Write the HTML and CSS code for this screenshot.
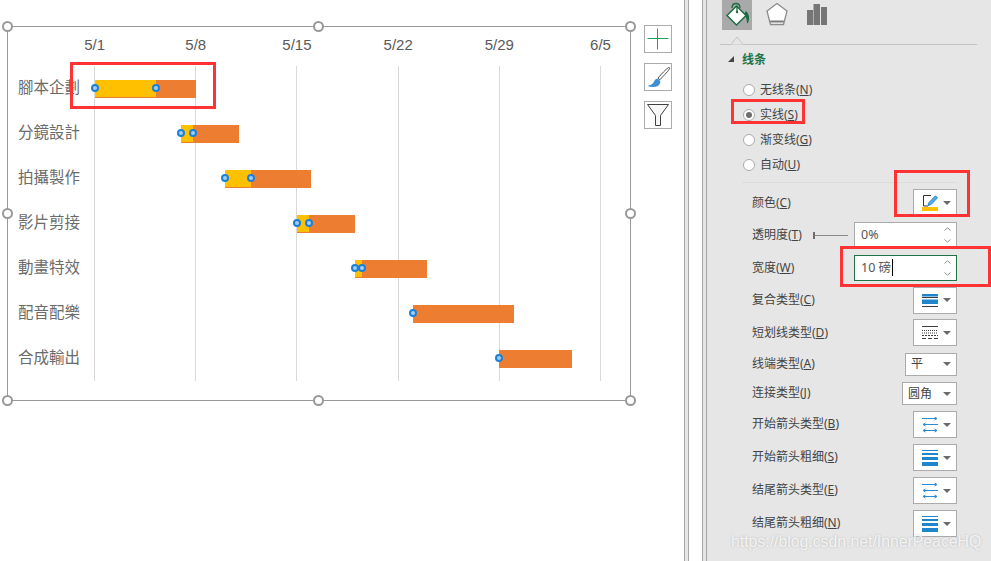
FILE: index.html
```html
<!DOCTYPE html>
<html lang="zh">
<head>
<meta charset="UTF-8" />
<title>Gantt chart - line format</title>
<link rel="stylesheet" href="styles.css">
</head>
<body>

<svg class="defs">
  <symbol id="ico-up" viewBox="0 0 7 4"><path d="M.5 3.500 3.500 .8l3 2.700" fill="none" stroke="#8c8c8c"/></symbol>
  <symbol id="ico-down" viewBox="0 0 7 4"><path d="M.5 .5l3 2.700 3-2.700" fill="none" stroke="#8c8c8c"/></symbol>
  <symbol id="ico-arrows" viewBox="0 0 16 16">
    <path d="M0 1.500h15M12.500 0 15 1.500 12.500 3M16 7.500H1M3.500 6 1 7.500 3.500 9M1 13.500h14M3.500 12 1 13.500 3.500 15M12.500 12l2.500 1.500L12.500 15" fill="none" stroke="#2a8dd4"/>
  </symbol>
  <symbol id="ico-weight" viewBox="0 0 16 16">
    <path d="M0 0h16v1H0zM0 3h16v2H0zM0 7h16v3H0zM0 12h16v4H0z" fill="#1f86cc"/>
  </symbol>
</svg>

<div class="page">

  <!-- Graphique -->
  <div class="workspace">
    <div class="chart">
      <div class="axis">
        <span>5/1</span><span>5/8</span><span>5/15</span><span>5/22</span><span>5/29</span><span>6/5</span>
      </div>
      <div class="rows">
        <div class="row">
          <div class="row-label">腳本企劃</div>
          <div class="track">
            <div class="bar" style="margin-left:1px;width:101px">
              <span class="bar-done" style="width:61px"></span>
              <i class="dot" style="left:0"></i><i class="dot" style="left:61px"></i>
            </div>
          </div>
        </div>
        <div class="row">
          <div class="row-label">分鏡設計</div>
          <div class="track">
            <div class="bar" style="margin-left:87px;width:58px">
              <span class="bar-done" style="width:12px"></span>
              <i class="dot" style="left:0"></i><i class="dot" style="left:12px"></i>
            </div>
          </div>
        </div>
        <div class="row">
          <div class="row-label">拍攝製作</div>
          <div class="track">
            <div class="bar" style="margin-left:131px;width:86px">
              <span class="bar-done" style="width:26px"></span>
              <i class="dot" style="left:0"></i><i class="dot" style="left:26px"></i>
            </div>
          </div>
        </div>
        <div class="row">
          <div class="row-label">影片剪接</div>
          <div class="track">
            <div class="bar" style="margin-left:203px;width:58px">
              <span class="bar-done" style="width:12px"></span>
              <i class="dot" style="left:0"></i><i class="dot" style="left:12px"></i>
            </div>
          </div>
        </div>
        <div class="row">
          <div class="row-label">動畫特效</div>
          <div class="track">
            <div class="bar" style="margin-left:261px;width:72px">
              <span class="bar-done" style="width:7px"></span>
              <i class="dot" style="left:0"></i><i class="dot" style="left:7px"></i>
            </div>
          </div>
        </div>
        <div class="row">
          <div class="row-label">配音配樂</div>
          <div class="track">
            <div class="bar" style="margin-left:319px;width:101px">
              <i class="dot" style="left:0"></i>
            </div>
          </div>
        </div>
        <div class="row">
          <div class="row-label">合成輸出</div>
          <div class="track">
            <div class="bar" style="margin-left:405px;width:73px">
              <i class="dot" style="left:0"></i>
            </div>
          </div>
        </div>
      </div>

      <i class="handle h-tl"></i><i class="handle h-tc"></i><i class="handle h-tr"></i>
      <i class="handle h-ml"></i><i class="handle h-mr"></i>
      <i class="handle h-bl"></i><i class="handle h-bc"></i><i class="handle h-br"></i>
    </div>

    <div class="chart-tools">
      <button class="tool">
        <svg width="26" height="26" viewBox="0 0 26 26"><path d="M2.500 12.500h21M12.500 2.500v21" stroke="#21a355" fill="none"/></svg>
      </button>
      <button class="tool">
        <svg width="26" height="26" viewBox="0 0 26 26">
          <path d="M23.500 3.500c-3 2-7 6.500-10.500 10.500l1.800 1.800c3.500-3.800 8-8 9.700-11 .4-1-.2-1.600-1-1.300z" fill="#fff" stroke="#595959"/>
          <path d="M12.500 14.500c-2 .5-3 1.500-4 4-.6 1.500-3 2.800-6 3.500 3 1.200 7.500 1.200 10 .2 2-.8 3-3 2.800-5.200z" fill="#3f8fd6"/>
        </svg>
      </button>
      <button class="tool">
        <svg width="26" height="26" viewBox="0 0 26 26"><path d="M2.500 2.500h21l-8 11v10h-5v-10z" fill="#f7f7f7" stroke="#404040"/></svg>
      </button>
    </div>
  </div>

  <div class="splitter"></div>
  <div class="gutter"></div>
  <div class="splitter"></div>

  <!-- Panneau format -->
  <div class="panel">
    <div class="tabs">
      <div class="tab tab-active">
        <svg width="30" height="30" viewBox="0 0 30 30">
          <path d="M24 11c2.500 2 3.300 5 3 8-.2 2-.7 3.500-1.500 4.500-.8-1.500-.8-3-1-4.500-.3-2-2-3.300-3-4z" fill="#1e6b41"/>
          <path d="M14.500 6 24 15.500 14.500 25 5 15.500z" fill="#fff" stroke="#1e6b41" stroke-width="1.500"/>
          <path d="M10 8c0-6 8-6 8 0M15 6v6" fill="none" stroke="#1e6b41" stroke-width="1.300"/>
          <circle cx="15" cy="12" r="1.200" fill="#1e6b41"/>
        </svg>
      </div>
      <div class="tab">
        <svg width="30" height="30" viewBox="0 0 30 30">
          <path d="M15 3.500 25 11 21.500 24.500h-13L5 11z" fill="#fff" stroke="#8c8c8c" stroke-width="1.300"/>
          <path d="M8.200 21.500h13.600" stroke="#7a7a7a" stroke-width="2"/>
        </svg>
      </div>
      <div class="tab">
        <svg width="30" height="30" viewBox="0 0 30 30">
          <path d="M5 10h6v15H5zM11.500 4h6.500v21h-6.500zM19 7h6v18h-6z" fill="#767676"/>
        </svg>
      </div>
      <svg class="tab-notch" width="14" height="9" viewBox="0 0 14 9"><path d="M0 8.500h1L7 1l6 7.500h1" fill="#e6e6e6" stroke="#c4c4c4"/></svg>
    </div>

    <div class="section-title"><i class="twisty"></i>线条</div>

    <div class="radios">
      <div class="radio-row"><i class="radio"></i>无线条(<u>N</u>)</div>
      <div class="radio-row"><i class="radio radio-on"></i>实线(<u>S</u>)</div>
      <div class="radio-row"><i class="radio"></i>渐变线(<u>G</u>)</div>
      <div class="radio-row"><i class="radio"></i>自动(<u>U</u>)</div>
    </div>

    <div class="props">
      <div class="prop prop-top">
        <span class="prop-name">颜色(<u>C</u>)</span>
        <div class="pick">
          <svg width="16" height="16" viewBox="0 0 16 16">
            <path d="M9 .5H1.500v10.500H6" fill="none" stroke="#333"/>
            <path d="M13.500 .8 15.500 2.800 9 9.500 6 10.500 7 7.500z" fill="#5aa9e2" stroke="#1f86cc"/>
            <path d="M0 12h16v4H0z" fill="#ffc000"/>
          </svg>
          <i class="caret"></i>
        </div>
      </div>
      <div class="prop prop-top">
        <span class="prop-name">透明度(<u>T</u>)</span>
        <div class="prop-right">
          <div class="slider"></div>
          <div class="field">
            <span>0%</span>
            <div class="spin"><svg width="7" height="4"><use href="#ico-up"/></svg><svg width="7" height="4"><use href="#ico-down"/></svg></div>
          </div>
        </div>
      </div>
      <div class="prop prop-top">
        <span class="prop-name">宽度(<u>W</u>)</span>
        <div class="field field-focus">
          <span class="field-value">10 磅</span>
          <div class="spin"><svg width="7" height="4"><use href="#ico-up"/></svg><svg width="7" height="4"><use href="#ico-down"/></svg></div>
        </div>
      </div>
      <div class="prop prop-top">
        <span class="prop-name">复合类型(<u>C</u>)</span>
        <div class="pick">
          <svg width="16" height="13" viewBox="0 0 16 13"><path d="M0 0h16v2.500H0zM0 5.500h16V10H0z" fill="#1f86cc"/><path d="M0 3.500h16M0 12.500h16" stroke="#3d3d3d"/></svg>
          <i class="caret"></i>
        </div>
      </div>
      <div class="prop prop-top">
        <span class="prop-name">短划线类型(<u>D</u>)</span>
        <div class="pick">
          <svg width="16" height="13" viewBox="0 0 16 13"><path d="M0 .5h16" stroke="#3d3d3d"/><path d="M0 4.500h16M0 7h16" stroke="#3d3d3d" stroke-dasharray="1 1"/><path d="M0 9.500h16" stroke="#3d3d3d" stroke-dasharray="2 1"/><path d="M0 12.500h16" stroke="#3d3d3d" stroke-dasharray="4 2"/></svg>
          <i class="caret"></i>
        </div>
      </div>
      <div class="prop prop-cap">
        <span class="prop-name">线端类型(<u>A</u>)</span>
        <div class="pick pick-cap"><span>平</span><i class="caret"></i></div>
      </div>
      <div class="prop prop-join">
        <span class="prop-name">连接类型(<u>J</u>)</span>
        <div class="pick pick-join"><span>圆角</span><i class="caret"></i></div>
      </div>
      <div class="prop">
        <span class="prop-name">开始箭头类型(<u>B</u>)</span>
        <div class="pick"><svg width="16" height="16"><use href="#ico-arrows"/></svg><i class="caret"></i></div>
      </div>
      <div class="prop">
        <span class="prop-name">开始箭头粗细(<u>S</u>)</span>
        <div class="pick"><svg width="16" height="16"><use href="#ico-weight"/></svg><i class="caret"></i></div>
      </div>
      <div class="prop">
        <span class="prop-name">结尾箭头类型(<u>E</u>)</span>
        <div class="pick"><svg width="16" height="16"><use href="#ico-arrows"/></svg><i class="caret"></i></div>
      </div>
      <div class="prop">
        <span class="prop-name">结尾箭头粗细(<u>N</u>)</span>
        <div class="pick"><svg width="16" height="16"><use href="#ico-weight"/></svg><i class="caret"></i></div>
      </div>
    </div>
  </div>

  <!-- Annotations rouges et filigrane -->
  <div class="mark mark-task"></div>
  <div class="mark mark-solid"></div>
  <div class="mark mark-color"></div>
  <div class="mark mark-width"></div>
  <div class="watermark">https://blog.csdn.net/InnerPeaceHQ</div>

</div>

</body>
</html>
```

FILE: styles.css
```css
html, body { margin: 0; height: 100%; background: #fff; overflow: hidden; }
.defs { display: none; }
.page { position: relative; display: flex; width: 991px; height: 561px; overflow: hidden; font-family: "Noto Sans", "Noto Sans CJK SC", sans-serif; font-size: 12px; color: #444; }

/* graphique */
.workspace { display: flex; align-items: flex-start; width: 684px; padding: 25px 0 0 7px; box-sizing: border-box; gap: 13px; }
.chart { position: relative; width: 622px; height: 373px; margin-top: 1px; border: 1px solid #999; flex: none; }
.axis { display: flex; height: 39px; margin-left: 36px; line-height: 36px; font-family: "Liberation Sans", sans-serif; font-size: 15px; color: #595959; }
.axis span { flex: 0 0 101.2px; text-align: center; }
.rows {
  width: 594px;
  background: repeating-linear-gradient(90deg, #d9d9d9 0 1px, transparent 1px 101.2px) 86px 0 / calc(100% - 86px) 100% no-repeat;
}
.row { display: flex; align-items: center; height: 45px; }
.row-label { width: 76px; padding: 0 0 5px 10px; flex: none; font-family: "Noto Sans CJK TC", sans-serif; font-size: 15.500px; line-height: 20px; color: #6b6b6b; white-space: nowrap; }
.track { flex: 1; }
.bar { position: relative; display: flex; height: 18px; background: #ed7d31; }
.bar-done { height: 17px; background: #ffc000; }
.dot { position: absolute; top: 4.500px; width: 8px; height: 8px; margin-left: -4px; box-sizing: border-box; border: 2px solid #1a80d9; border-radius: 50%; background: #a3cef1; }

.handle { position: absolute; width: 11px; height: 11px; box-sizing: border-box; border: 2px solid #999; border-radius: 50%; background: #fff; }
.h-tl { left: -6px; top: -6px; }
.h-tc { left: 305px; top: -6px; }
.h-tr { left: 617px; top: -6px; }
.h-ml { left: -6px; top: 181px; }
.h-mr { left: 617px; top: 181px; }
.h-bl { left: -6px; top: 368px; }
.h-bc { left: 305px; top: 368px; }
.h-br { left: 617px; top: 368px; }

.chart-tools { display: flex; flex-direction: column; gap: 10px; }
.tool { display: flex; align-items: center; justify-content: center; width: 28px; height: 28px; padding: 0; border: 1px solid #ababab; background: #fff; }

/* separateurs */
.splitter { width: 3px; flex: none; background: #e6e6e6; border-left: 1px solid #a6a6a6; border-right: 1px solid #a6a6a6; }
.gutter { width: 13px; flex: none; }

/* panneau */
.panel { flex: 1; background: #e6e6e6; }
.tabs { position: relative; display: flex; gap: 10px; height: 44px; margin: 0 14px 0 13px; padding-left: 2px; border-bottom: 1px solid #c4c4c4; }
.tab { width: 30px; height: 30px; }
.tab-active { background: #a9a9a9; }
.tab svg { display: block; }
.tab-notch { position: absolute; left: 10px; top: 36px; }

.section-title { display: flex; align-items: center; height: 28px; padding-left: 21px; font-weight: bold; font-size: 12px; color: #217346; }
.twisty { width: 0; height: 0; margin-right: 8px; border-left: 6px solid transparent; border-bottom: 6px solid #444; }

.radios { margin: 4.500px 34px 4px 35px; padding-bottom: 4px; border-bottom: 1px solid #dcdcdc; }
.radio-row { display: flex; align-items: center; height: 25px; line-height: 16px; }
.radio { position: relative; width: 12px; height: 12px; margin: 0 5px 0 1px; box-sizing: border-box; border: 1px solid #ababab; border-radius: 50%; background: #fff; }
.radio-on::after { content: ""; position: absolute; left: 2px; top: 2px; width: 6px; height: 6px; border-radius: 50%; background: #6e6e6e; }

.props { margin: 0 34px 0 45px; }
.prop { display: flex; align-items: center; justify-content: space-between; height: 33px; white-space: nowrap; }
.prop-top { height: 32.500px; }
.prop-cap { height: 30px; }
.prop-join { height: 29px; }
.prop-name { padding-bottom: 2px; line-height: 16px; }
.prop-top .prop-name, .prop-cap .prop-name { padding-bottom: 0; }
.prop-right { display: flex; align-items: center; gap: 6px; }

.pick { display: flex; align-items: center; justify-content: space-between; width: 44px; height: 27px; padding: 0 5px 0 8px; box-sizing: border-box; border: 1px solid #ababab; background: #fff; line-height: 16px; }
.pick svg { display: block; }
.pick-cap { width: 52px; height: 23px; padding-left: 5px; }
.pick-join { width: 55px; height: 23px; padding-left: 5px; }
.caret { width: 0; height: 0; border-left: 4px solid transparent; border-right: 4px solid transparent; border-top: 4px solid #6a6a6a; }

.slider { position: relative; width: 35px; height: 1px; background: #8c8c8c; }
.slider::before { content: ""; position: absolute; left: 0; top: -3px; width: 2px; height: 7px; background: #6e6e6e; }

.field { display: flex; align-items: center; justify-content: space-between; width: 103px; height: 26px; padding: 0 5px 0 6px; box-sizing: border-box; border: 1px solid #ababab; background: #fff; color: #555; font-size: 12.500px; line-height: 16px; }
.field-focus { border-color: #217346; }
.field-value { padding-right: 1px; border-right: 1px solid #000; line-height: 17px; }
.spin { display: flex; flex-direction: column; gap: 8px; }
.spin svg { display: block; }

/* annotations */
.mark { position: absolute; box-sizing: border-box; border: 3px solid #ff3333; }
.mark-task { left: 70px; top: 62px; width: 146px; height: 47px; }
.mark-solid { left: 731px; top: 99px; width: 74px; height: 25px; }
.mark-color { left: 894px; top: 170px; width: 76px; height: 47px; }
.mark-width { left: 840px; top: 246px; width: 151px; height: 41px; }
.watermark { position: absolute; left: 731px; top: 533px; font-family: "Liberation Sans", sans-serif; font-size: 15.800px; line-height: 18px; color: rgba(255,255,255,.8); text-shadow: 0 0 2px rgba(120,120,120,.45); white-space: nowrap; }
```
